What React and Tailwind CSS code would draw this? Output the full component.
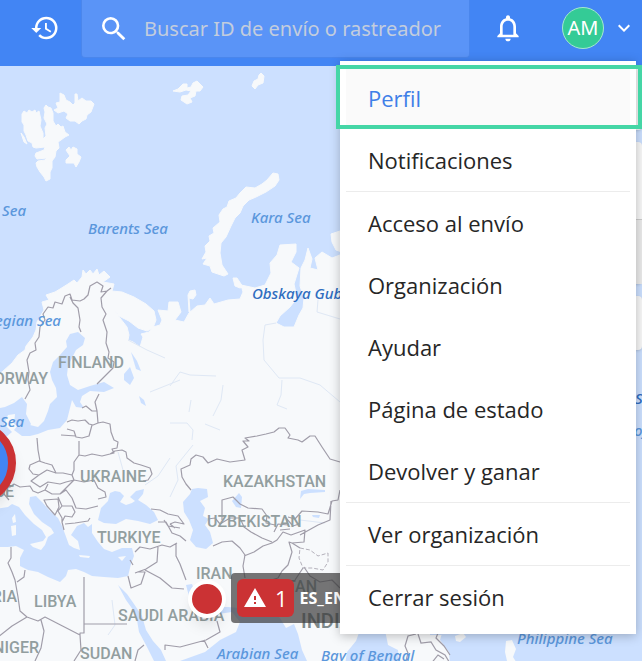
import React, { useState } from "react";
import {
  MdHistory,
  MdSearch,
  MdNotificationsNone,
  MdKeyboardArrowDown,
  MdWarning,
} from "react-icons/md";

const menuGroups = [
  ["Perfil", "Notificaciones"],
  ["Acceso al envío", "Organización", "Ayudar", "Página de estado", "Devolver y ganar"],
  ["Ver organización"],
  ["Cerrar sesión"],
];

const seaLabels = [
  { text: "Sea", x: 2, y: 216 },
  { text: "Barents Sea", x: 88, y: 234 },
  { text: "Kara Sea", x: 251, y: 223 },
  { text: "Norwegian Sea", x: 61, y: 326, anchor: "end" },
  { text: "Sea", x: 0, y: 427 },
  { text: "Obskaya Guba", x: 252, y: 299, fill: "#2f6dc0" },
  { text: "Arabian Sea", x: 217, y: 659 },
  { text: "Bay of Bengal", x: 321, y: 661 },
  { text: "Philippine Sea", x: 517, y: 644 },
  { text: "Sea", x: 635, y: 404, fill: "#2f6dc0" },
  { text: "of Japan", x: 634, y: 436 },
];

const countryLabels = [
  { text: "FINLAND", x: 58, y: 368 },
  { text: "NORWAY", x: 48, y: 384, anchor: "end" },
  { text: "UKRAINE", x: 80, y: 482 },
  { text: "FRANCE", x: 14, y: 497, anchor: "end" },
  { text: "TURKIYE", x: 97, y: 543 },
  { text: "KAZAKHSTAN", x: 223, y: 487 },
  { text: "UZBEKISTAN", x: 207, y: 527 },
  { text: "IRAN", x: 196, y: 579 },
  { text: "PAKISTAN", x: 317, y: 592, anchor: "end" },
  { text: "ALGERIA", x: 17, y: 602, anchor: "end" },
  { text: "LIBYA", x: 34, y: 607 },
  { text: "SAUDI ARABIA", x: 118, y: 621 },
  { text: "NIGER", x: 39, y: 653, anchor: "end" },
  { text: "SUDAN", x: 80, y: 659 },
];

// Land masses
const land = [
  // Svalbard
  "M22,114 L24,111 27,113 29,110 32,112 35,110 36,113 39,111 41,120 40,126 43,133 43,139 46,136 45,128 47,124 44,118 45,112 44,108 46,105 48,107 51,108 53,113 53,121 56,126 58,124 61,127 63,126 65,132 69,135 65,137 61,140 58,142 59,148 56,151 55,157 52,161 52,168 50,172 50,179 46,181 44,177 40,172 37,167 36,163 38,161 45,160 47,158 37,159 35,156 36,153 44,150 45,147 36,148 33,147 32,143 28,141 26,135 24,131 24,125 22,122Z",
  "M54,110 L58,108 56,103 60,102 60,93 64,95 66,100 70,102 73,105 75,103 75,94 77,94 78,101 82,98 86,101 91,101 94,104 91,112 87,115 86,119 82,121 79,124 75,121 70,121 66,118 68,114 64,111 58,113Z",
  "M66,150 L69,147 71,150 73,147 77,149 77,154 81,157 79,162 76,167 74,163 66,163 66,160 70,156Z",
  "M21,133 L24,137 27,144 24,142Z",
  // Franz Josef Land
  "M173,91 L178,89 183,84 187,84 187,88 191,87 193,83 197,81 203,87 200,91 196,91 195,96 190,98 192,102 187,104 181,100 182,96 188,95 191,91 186,90 180,92Z",
  "M252,86 L254,81 258,79 259,75 261,73 264,76 263,83 258,85 255,89Z",
  // Novaya Zemlya
  "M273,173 L278,174 279,180 275,186 266,192 256,197 249,200 243,206 240,213 235,218 231,226 226,237 221,243 220,253 222,265 228,274 224,276 218,274 212,272 210,266 203,264 207,258 202,259 206,252 205,246 210,241 209,236 214,233 213,228 220,222 219,215 223,209 227,207 229,201 236,198 240,193 246,187 255,188 262,184 267,180Z",
  "M190,312 L189,312 188,295 190,291 195,290 196,295 193,299 189,298Z",
  "M233,278 L237,278 243,287 240,288 235,286Z",
  "M331,234 L340,231 345,253 336,250 332,242Z",
  // Eurasia and Africa
  "M-5,375 L2,372 12,363 18,355 25,350 26,346 33,337 36,330 37,322 44,310 42,302 49,300 46,295 55,292 60,289 68,284 74,280 77,283 82,277 83,270 86,274 90,270 93,274 97,269 99,275 104,271 110,277 103,282 114,284 112,291 122,292 134,297 146,304 154,311 156,320 153,328 147,331 138,328 129,321 119,316 115,311 120,318 127,327 129,335 128,340 133,342 140,347 143,337 141,334 149,332 153,327 160,325 162,320 158,310 168,311 169,302 178,302 181,312 175,320 184,322 189,313 197,306 205,305 210,298 214,304 228,300 240,299 243,292 241,285 255,288 265,285 271,273 270,263 277,255 280,245 296,244 296,252 291,262 299,268 294,284 297,298 290,307 280,316 276,323 284,327 294,327 299,315 303,308 304,298 300,286 301,268 305,260 308,248 312,259 310,268 318,270 315,258 322,252 332,258 340,255 360,260 380,661 -5,661Z",
];

// Seas, gulfs and lakes cut into the land
const water = [
  "M70,334 L78,332 85,338 83,345 76,350 72,358 68,366 67,375 70,385 78,390 90,386 104,382 114,388 104,392 90,391 82,396 80,402 84,408 76,407 72,400 70,408 67,420 60,428 48,430 38,434 30,436 22,436 14,430 20,423 30,425 38,427 44,421 48,411 50,404 57,397 56,388 52,380 50,372 53,362 60,355 67,347 66,341Z",
  "M-5,409 L5,407 14,403 22,397 27,404 26,414 31,424 24,434 20,427 14,424 15,414 8,415 4,424 12,432 6,437 -5,436Z",
  "M124,374 L130,367 134,378 130,385 124,380Z",
  "M131,352 L137,361 141,371 136,369Z",
  "M139,396 L144,400 146,406 141,403Z",
  "M-5,509 L8,507 12,504 19,507 25,515 34,524 42,530 46,537 43,541 30,544 33,547 41,550 45,545 48,537 54,533 51,528 42,522 34,514 29,504 30,497 36,496 42,502 50,511 58,518 62,526 65,534 69,545 74,548 80,550 78,541 71,535 77,526 84,523 88,527 92,524 92,533 98,542 104,549 112,552 122,548 132,548 134,556 131,564 128,576 118,578 104,577 92,576 84,572 76,569 68,570 66,576 60,582 48,577 38,572 28,570 20,566 20,558 24,550 16,546 8,547 -5,547Z",
  "M98,520 L101,508 108,501 110,493 115,491 120,492 124,496 120,502 126,505 132,503 135,501 130,497 136,491 144,489 143,494 138,500 146,505 154,512 158,520 150,524 138,521 126,519 116,524 104,523Z",
  "M183,502 L190,494 192,489 198,488 207,489 208,497 200,501 205,508 203,516 209,519 205,525 210,532 213,543 206,549 196,547 190,540 193,530 189,520 184,512Z",
  "M232,501 L239,493 242,497 241,508 236,507Z",
  "M300,499 L301,491 308,489 325,490 325,492 310,493 304,494Z",
  "M312,515 L320,515 319,518 313,517Z",
  "M118,585 L127,594 134,604 142,616 146,630 153,641 161,650 166,661 154,661 146,645 139,632 136,614 126,600Z",
  "M186,585 L192,584 195,592 206,602 218,607 228,607 250,609 270,610 280,618 286,628 294,624 298,634 302,650 307,661 180,661 205,652 220,640 236,632 240,622 232,612 218,614 205,610 190,600Z",
  "M345,665 L347,652 356,641 360,630 385,630 388,645 398,650 399,665Z",
  "M443,630 L650,630 650,665 450,665 449,652 440,640Z",
  "M430,150 L650,150 650,635 430,635Z",
];

const islands = [
  "M12,518 L15,514 16,522 13,523Z",
  "M11,526 L16,525 16,535 12,536Z",
  "M79,555 L90,556 89,558 80,557Z",
  "M118,557 L126,556 122,561Z",
  "M455,636 L463,633 466,637 460,642 456,641Z",
  "M506,641 L512,640 516,649 513,657 518,665 507,661 505,652Z",
];

const borders =
  "M25,399 L30,390 28,380 29,372 27,360 30,353 36,350 35,343 39,337 40,327 45,320 43,314 48,307 53,308 55,302 62,304 65,296 70,294 72,300 80,301 84,299 88,295 90,286 97,282 103,286 101,292 107,291 111,288" +
  "M70,297 L73,303 78,308 80,320 79,327 81,332" +
  "M107,291 L101,298 102,307 106,314 103,320 107,332 106,343 109,352 108,358 114,362 113,368 97,384" +
  "M99,394 L95,402 97,411 98,423 M82,408 L86,406 92,411 97,411" +
  "M67,422 L72,420 78,421 85,420 89,424 93,425 98,423 103,422 110,424 111,432 114,440 118,442 117,448 112,449 114,453 110,454 M67,429 L74,431 76,437 82,438 89,436 92,425 M61,435 L76,436 M37,438 L38,450 40,461 M79,441 L79,455" +
  "M39,461 L30,465 29,469 33,474 39,475 47,470 56,473 52,465 45,463Z M55,473 L63,473 72,475 74,470 74,462 79,455 79,441 M79,455 L85,456 92,454 102,456 110,454 115,451 122,450 126,452 127,458 134,463 141,465 150,468 152,474 148,480 143,481" +
  "M72,475 L74,480 66,482 60,484 48,482 40,487 31,481 39,475 M74,480 L84,482 94,480 98,488 105,492 106,497 98,499 M48,484 L45,490 52,494 60,494 68,486 74,480 M60,494 L66,490 72,498 76,508 86,509 98,506 M44,500 L58,499 59,507 55,515 47,506Z M58,497 L62,506 58,511 62,518 62,522 64,530 M62,506 L72,506 75,512 72,517 65,516 62,522 M65,524 L75,523 88,521 90,518" +
  "M-2,488 L10,487 14,484 20,487 30,486 33,491 38,493 45,490 M-2,483 L6,486 4,494 9,500" +
  "M151,509 L160,510 168,514 178,516 184,524 175,522 170,524 M158,522 L166,522 172,533 180,536 186,541 M135,552 L140,547 150,549 162,545 170,547 177,543 M158,547 L157,562 146,569 135,573 M128,576 L131,588 141,584 145,572 137,572 M145,570 L160,578 172,588 184,589 M176,544 L176,556 180,564 186,580 M133,565 L130,560" +
  "M11,547 L11,558 8,563 12,572 15,580 18,597 20,611 27,617 38,621 45,617 80,635 80,633 84,633 84,577 M84,624 L127,624 M25,570 L24,577 17,582 M27,617 L12,626 -2,637 M41,620 L44,631 41,648 35,661 M80,635 L81,650 74,661 M135,661 L138,650 144,645 M165,650 L165,645 180,647 206,640 220,632 217,621 M204,640 L208,648" +
  "M191,490 L186,484 182,477 181,469 190,465 191,459 196,455 203,457 208,463 217,459 230,462 245,460 242,450 248,447 243,441 249,441 245,438 257,436 266,434 274,432 279,428 285,428 290,435 288,438 298,440 302,442 310,436 315,436 322,447 330,459 340,462" +
  "M340,490 L338,500 332,501 328,514 318,512 302,511 295,519 288,517 M222,520 L222,500 233,497 240,504 248,508 262,509 267,516 266,523 275,525 M208,519 L215,518 220,524 230,518 240,518 244,527 251,532 262,538 272,542" +
  "M213,546 L222,542 232,541 240,548 245,555 243,566 245,578 M244,556 L254,552 263,546 272,543 277,540 283,532 291,535 305,530 304,542 292,543 289,542 292,552 288,565 282,571 278,578 262,583 M274,532 L278,524 288,525 286,518 293,526 299,524 M292,543 L300,548 M300,535 L318,525 330,520 331,501 M280,530 L290,529 M170,524 L175,528 M164,520 L168,526 180,528 M304,567 L310,576 320,582 332,580 340,588 M303,568 L295,580";

const southEastBorders =
  "M406,661 L408,653 405,646 408,636 416,634 M418,634 L421,643 431,642 436,650 445,655 451,665 M430,665 L438,655 444,659 M438,633 L436,638 444,646 450,655";

const rivers =
  "M276,323 L265,325 263,340 264,360 279,378 300,378 320,385 340,402 M282,380 L281,395 277,405 287,409 M318,300 L317,312 340,319 M170,386 L180,372 190,375 216,376 M223,385 L221,400 213,416 M191,400 L189,412 M170,423 L187,423 193,430 192,440 M205,424 L220,430 M193,445 L176,466 178,480 170,497 M150,392 L180,380 M118,452 L123,470 M145,485 L158,476 170,458 M112,600 L115,625 108,635 M128,340 L147,350 165,358 M300,520 L325,523";

function MapCanvas() {
  return (
    <svg className="absolute inset-0 h-full w-full" aria-hidden="true">
      <g transform="translate(0 -66)">
        <g fill="#f7f9fb" stroke="#f7f9fb" strokeWidth="1" strokeLinejoin="round">
          {land.map((d) => (
            <path key={d} d={d} />
          ))}
          <path d="M380,550 H650 V665 H370Z" />
        </g>
        <g fill="#cce0ff">
          {water.map((d) => (
            <path key={d} d={d} />
          ))}
        </g>
        <g fill="#f7f9fb">
          {islands.map((d) => (
            <path key={d} d={d} />
          ))}
        </g>
        <path d={rivers} fill="none" stroke="#dfe8f5" strokeWidth="1" />
        <path d={borders} fill="none" stroke="#a09da9" strokeWidth="1.2" strokeLinejoin="round" />
        <path d={southEastBorders} fill="none" stroke="#a09da9" strokeWidth="1.2" />
        <path
          d="M300,548 L310,550 318,556 328,553 328,562 323,570 312,568 303,568 299,558Z"
          fill="none"
          stroke="#b4b1bb"
          strokeDasharray="4 2"
        />
        <g className="font-['Noto_Sans',sans-serif] text-[15px] font-medium italic">
          {seaLabels.map((l) => (
            <text key={l.text + l.x} x={l.x} y={l.y} textAnchor={l.anchor} fill={l.fill || "#5b97dc"}>
              {l.text}
            </text>
          ))}
        </g>
        <g className="font-[Roboto,sans-serif] text-base font-medium" fill="#929e9f">
          {countryLabels.map((l) => (
            <text key={l.text} x={l.x} y={l.y} textAnchor={l.anchor}>
              {l.text}
            </text>
          ))}
          <text x="301" y="628" fill="#7d888a" className="text-xl">
            INDIA
          </text>
        </g>
      </g>
    </svg>
  );
}

function Header({ open, onToggle }) {
  return (
    <header className="relative z-20 flex h-[66px] items-start bg-[#4285f4] pb-2 font-['Noto_Sans',sans-serif] text-white">
      <button type="button" aria-label="Historial" className="flex h-14 w-20 shrink-0 items-center justify-end pr-5">
        <MdHistory size={30} />
      </button>
      <label className="ml-px flex h-[58px] min-w-0 flex-1 items-center gap-3.5 rounded-b-sm border border-t-0 border-[#4a86ec] bg-[#5a94f7] pl-4">
        <MdSearch size={32} className="shrink-0" />
        <input
          type="text"
          aria-label="Buscar"
          placeholder="Buscar ID de envío o rastreador"
          className="w-full min-w-0 bg-transparent text-xl outline-none placeholder:text-[#c3cddd]"
        />
      </label>
      <div className="flex h-14 shrink-0 items-center pr-1.5 pl-5">
        <button type="button" aria-label="Alertas" className="p-0.5">
          <MdNotificationsNone size={32} />
        </button>
        <button
          type="button"
          aria-expanded={open}
          onClick={onToggle}
          className="ml-9 flex items-center gap-2"
        >
          <span className="flex size-[42px] items-center justify-center rounded-full border border-[#a5e8d0] bg-[#34cb96] text-xl">
            AM
          </span>
          <MdKeyboardArrowDown size={24} />
        </button>
      </div>
    </header>
  );
}

function UserMenu() {
  const [active, setActive] = useState("Perfil");
  return (
    <nav className="absolute top-[61px] right-1.5 z-30 w-[296px] bg-white px-1.5 py-1.5 shadow-[0_2px_10px_rgba(0,0,0,0.25)]">
      {menuGroups.map((group) => (
        <ul key={group[0]} className="border-[#ececec] not-first:border-t">
          {group.map((item) => (
            <li key={item} className="relative">
              <a
                href="#"
                onClick={() => setActive(item)}
                className={
                  "flex h-[62px] items-center px-[22px] text-[22px] " +
                  (item === active ? "bg-[#fafafa] text-[#3f7fe8]" : "text-[#262626]")
                }
              >
                {item}
              </a>
              {item === active && (
                <span className="pointer-events-none absolute -top-0.5 -right-3 bottom-0 -left-2.5 border-4 border-[#45d6a6]" />
              )}
            </li>
          ))}
        </ul>
      ))}
    </nav>
  );
}

export default function App() {
  const [open, setOpen] = useState(true);

  return (
    <div className="relative flex min-h-screen flex-col overflow-hidden font-['Open_Sans','Noto_Sans',sans-serif]">
      <Header open={open} onToggle={() => setOpen(!open)} />
      <main className="relative flex-1 overflow-hidden bg-[#cce0ff]">
        <MapCanvas />

        {/* Map controls */}
        <div className="absolute top-0 right-0 flex w-16 flex-col gap-3">
          <div className="h-16 rounded-b bg-[#f8f8f8] shadow" />
          <div className="rounded bg-[#f8f8f8] shadow">
            <div className="h-[78px] border-b border-[#cccccc]" />
            <div className="h-[64px] bg-[#ebebeb]" />
          </div>
          <div className="h-[54px] rounded bg-[#f8f8f8] shadow" />
        </div>

        {/* Shipment pins */}
        <span className="absolute top-[355px] -left-[68px] size-[84px] rounded-full border-8 border-[#cb3234] bg-[#4285f4] shadow-lg" />
        <div className="absolute top-[507px] left-[231px] flex h-[50px] items-center gap-1.5 rounded bg-[#3c3c3c]/70 px-1.5 text-white">
          <span className="flex h-[38px] items-center gap-2 rounded-md bg-[#cb3234] px-1.5 text-[22px]">
            <MdWarning size={24} />1
          </span>
          <span className="text-base font-bold whitespace-nowrap">ES_ENVIO</span>
        </div>
        <span className="absolute top-[514px] left-[188px] size-[38px] rounded-full border-4 border-white bg-[#cb3234] shadow-lg" />
      </main>
      {open && <UserMenu />}
    </div>
  );
}
